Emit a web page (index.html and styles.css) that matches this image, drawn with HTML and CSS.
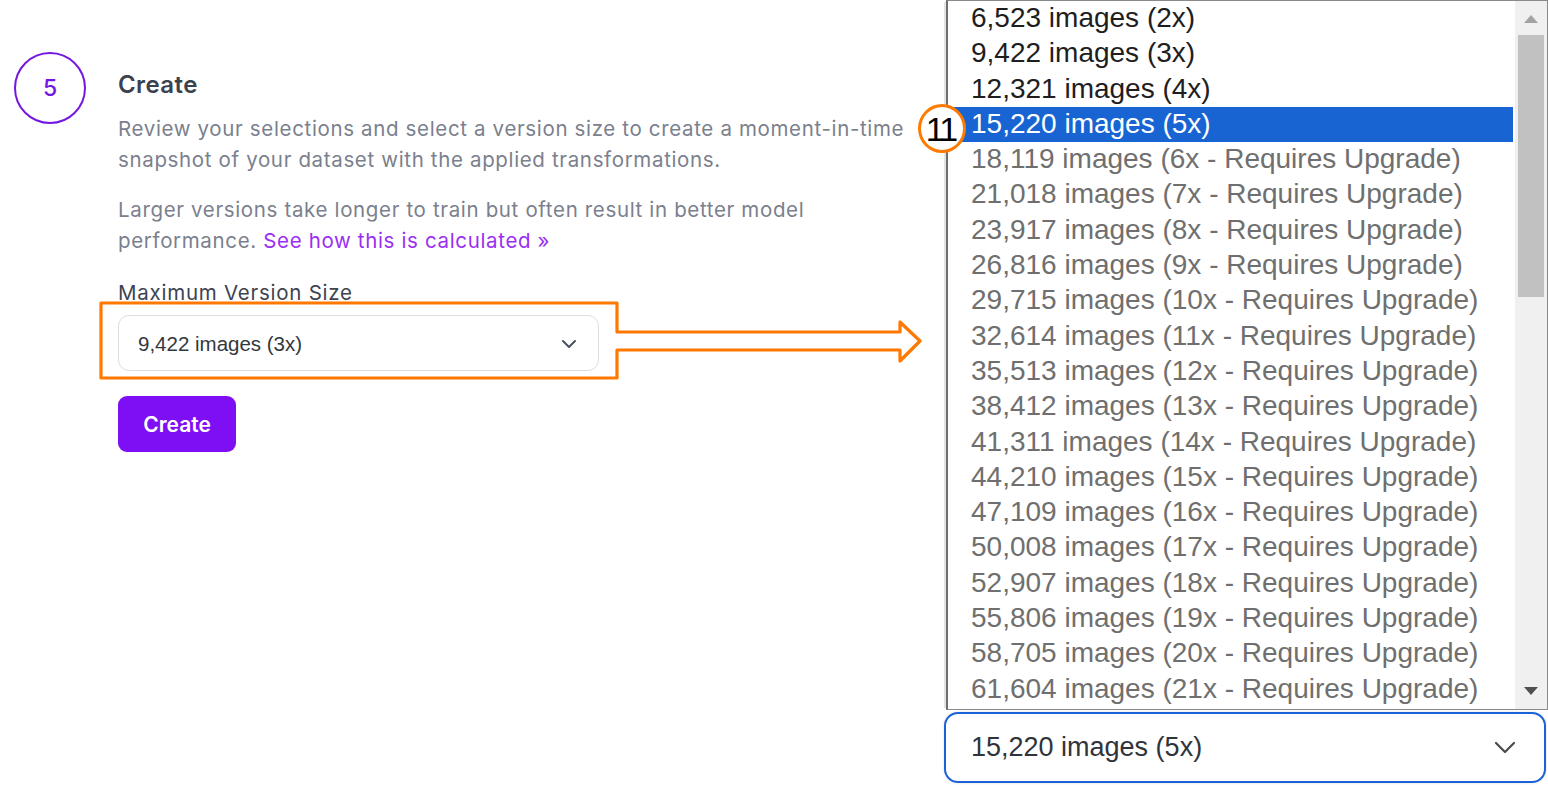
FILE: index.html
```html
<!DOCTYPE html>
<html>
<head>
<meta charset="utf-8">
<link rel="stylesheet" href="styles.css">
</head>
<body>
<div class="page">
  <section class="left">
    <div class="step">
      <div class="step-num">5</div>
      <div class="step-body">
        <h2 class="title">Create</h2>
        <p class="desc">Review your selections and select a version size to create a moment-in-time snapshot of your dataset with the applied transformations.</p>
        <p class="desc second">Larger versions take longer to train but often result in better model performance. <a class="link" href="#">See how this is calculated »</a></p>
        <div class="label">Maximum Version Size</div>
        <div class="select small">
          <span>9,422 images (3x)</span>
          <svg class="caret" width="16" height="10" viewBox="0 0 16 10"><path d="M2 2 L8 8 L14 2" fill="none" stroke="#4b5160" stroke-width="2" stroke-linecap="round" stroke-linejoin="round"/></svg>
        </div>
        <button class="btn">Create</button>
      </div>
    </div>
  </section>
  <section class="right">
    <div class="listbox">
      <ul class="options">
        <li class="opt">6,523 images (2x)</li>
        <li class="opt">9,422 images (3x)</li>
        <li class="opt">12,321 images (4x)</li>
        <li class="opt selected">15,220 images (5x)</li>
        <li class="opt dis">18,119 images (6x - Requires Upgrade)</li>
        <li class="opt dis">21,018 images (7x - Requires Upgrade)</li>
        <li class="opt dis">23,917 images (8x - Requires Upgrade)</li>
        <li class="opt dis">26,816 images (9x - Requires Upgrade)</li>
        <li class="opt dis">29,715 images (10x - Requires Upgrade)</li>
        <li class="opt dis">32,614 images (11x - Requires Upgrade)</li>
        <li class="opt dis">35,513 images (12x - Requires Upgrade)</li>
        <li class="opt dis">38,412 images (13x - Requires Upgrade)</li>
        <li class="opt dis">41,311 images (14x - Requires Upgrade)</li>
        <li class="opt dis">44,210 images (15x - Requires Upgrade)</li>
        <li class="opt dis">47,109 images (16x - Requires Upgrade)</li>
        <li class="opt dis">50,008 images (17x - Requires Upgrade)</li>
        <li class="opt dis">52,907 images (18x - Requires Upgrade)</li>
        <li class="opt dis">55,806 images (19x - Requires Upgrade)</li>
        <li class="opt dis">58,705 images (20x - Requires Upgrade)</li>
        <li class="opt dis">61,604 images (21x - Requires Upgrade)</li>
      </ul>
      <div class="scrollbar">
        <svg class="sb-arrow" width="14" height="8" viewBox="0 0 14 8"><path d="M0 8 L7 0 L14 8 Z" fill="#a3a3a3"/></svg>
        <div class="thumb"></div>
        <div class="sb-fill"></div>
        <svg class="sb-arrow" width="14" height="8" viewBox="0 0 14 8"><path d="M0 0 L7 8 L14 0 Z" fill="#505050"/></svg>
      </div>
    </div>
    <div class="select big">
      <span>15,220 images (5x)</span>
      <svg class="caret" width="22" height="13" viewBox="0 0 22 13"><path d="M2 2 L11 11 L20 2" fill="none" stroke="#4b4b4b" stroke-width="2.2" stroke-linecap="round" stroke-linejoin="round"/></svg>
    </div>
  </section>

  <svg class="annot" width="1548" height="785" viewBox="0 0 1548 785">
    <path d="M617 332 V303 H101 V378 H617 V350 H900 V361 L920 341 L900 322 V332 Z" fill="none" stroke="#ff7800" stroke-width="3.2" stroke-linejoin="round"/>
  </svg>
  <div class="badge">11</div>
</div>
</body>
</html>
```

FILE: styles.css
```css
* { box-sizing: border-box; }
html, body { margin: 0; padding: 0; background: #ffffff; }
body { font-family: Inter, "Noto Sans", sans-serif; width: 1548px; height: 785px; overflow: hidden; }

.page { position: relative; display: flex; width: 1548px; height: 785px; }

.left { width: 944px; padding: 52px 0 0 14px; }
.step { display: flex; align-items: flex-start; }
.step-num {
  width: 72px; height: 72px; flex: none;
  border: 2.5px solid #7417df; border-radius: 50%;
  color: #7417df; font-size: 23px; font-weight: 500;
  display: flex; align-items: center; justify-content: center;
}
.step-body { margin-left: 32px; padding-top: 18px; }
.title { margin: 0; font-size: 24px; letter-spacing: 0.4px; font-weight: 600; line-height: 30px; color: #3b414e; }
.desc { margin: 13px 0 0; font-size: 20.5px; letter-spacing: 0.65px; line-height: 31px; color: #7b808d; width: 810px; }
.desc.second { margin-top: 19px; }
.link { color: #9a2ff2; text-decoration: none; }
.label { margin-top: 24px; font-size: 20.5px; letter-spacing: 0.75px; line-height: 26px; color: #3d4351; }
.select {
  display: flex; align-items: center; justify-content: space-between;
  background: #fff;
}
.select.small {
  margin-top: 9px; width: 481px; height: 56px;
  border: 1.5px solid #dcdee3; border-radius: 11px;
  padding: 1px 21px 0 19px;
  font-family: "Liberation Sans", Arial, sans-serif; font-size: 20.5px; color: #333840;
}
.btn {
  display: block; margin-top: 25px; width: 118px; height: 56px;
  background: #7e0ef3; color: #fff; border: none; border-radius: 9px;
  font-family: Inter, sans-serif; font-size: 21px; font-weight: 600;
}

.right { width: 604px; display: flex; flex-direction: column; padding-top: 0; }
.listbox {
  display: flex; height: 710px; margin-left: 2px;
  border: 1px solid #8a8a8a; border-left: 2px solid #6f6f6f;
  box-shadow: -4px 0 0 -2px #e4e4e4;
  background: #fff;
}
.options { list-style: none; margin: 0; padding: 0; flex: 1; overflow: hidden; }
.opt {
  height: 35.3px; line-height: 34px; padding-left: 23px; white-space: nowrap;
  font-family: "Liberation Sans", Arial, sans-serif; font-size: 28px; color: #1e1e1e;
}
.opt.dis { color: #6f6f6f; }
.opt.selected { background: #1864d3; color: #fff; margin-right: 2px; }
.scrollbar {
  width: 32px; background: #f0f0f0; display: flex; flex-direction: column; align-items: center;
  padding: 14px 0 14px;
}
.sb-arrow { flex: none; }
.thumb { width: 26px; height: 262px; background: #c1c1c1; margin-top: 12px; flex: none; }
.sb-fill { flex: 1; }

.select.big {
  margin-top: 2px; width: 602px; height: 71px;
  border: 2px solid #1b61d8; border-radius: 14px;
  padding: 0 28px 0 25px;
  box-shadow: 0 0 3px rgba(0,0,0,0.12);
  font-family: "Liberation Sans", Arial, sans-serif; font-size: 27px; color: #30343a;
}

.annot { position: absolute; left: 0; top: 0; pointer-events: none; }
.badge {
  position: absolute; left: 918px; top: 104px;
  width: 48px; height: 49px; border-radius: 50%;
  border: 3px solid #ff7a00; background: #fff;
  display: flex; align-items: center; justify-content: center;
  font-family: "Liberation Sans", Arial, sans-serif; font-size: 34px; color: #000;
  letter-spacing: -3px; padding-right: 3px; line-height: 1;
}
```
